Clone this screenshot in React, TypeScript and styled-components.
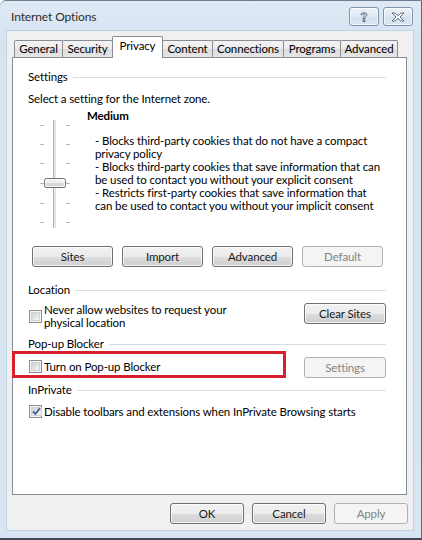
import React from "react";
import styled, { createGlobalStyle } from "styled-components";

const Global = createGlobalStyle`
  html, body { margin: 0; padding: 0; background: #ffffff; }
  body { font-family: Lato, "Noto Sans", sans-serif; font-size: 12px; color: #000; }
  * { box-sizing: border-box; }
`;

const FONT = `Lato, "Noto Sans", sans-serif`;

const Window = styled.div`
  width: 422px;
  height: 540px;
  display: flex;
  flex-direction: column;
  background: linear-gradient(#dfe9f5, #d6e3f1 40px, #d9e5f2);
  border-top: 1px solid #6d7d90;
  border-right: 1px solid #5d6a78;
  border-bottom: 2px solid #3e4753;
  border-top-left-radius: 6px;
  overflow: hidden;
  font-family: ${FONT};
  font-size: 11.5px;
  letter-spacing: -0.12px;
`;

const TitleBar = styled.div`
  height: 29px;
  display: flex;
  align-items: center;
  padding: 0 8px 0 11px;
`;

const Title = styled.div`
  flex: 1;
  color: #2d2d2d;
  font-size: 12px;
  padding-top: 2px;
`;

const CaptionButtons = styled.div`
  display: flex;
  gap: 4px;
  margin-top: 2px;
`;

const CaptionButton = styled.div`
  width: 30px;
  height: 19px;
  border: 1px solid #7f93ad;
  border-radius: 3px;
  background: linear-gradient(#eef3f9, #dde7f2 50%, #d3dfed 51%, #dbe6f2);
  box-shadow: inset 0 0 0 1px rgba(255, 255, 255, 0.7);
  display: flex;
  align-items: center;
  justify-content: center;
`;

const Body = styled.div`
  flex: 1;
  margin: 0 7px 7px 6px;
  background: #f0f0f0;
  border: 1px solid #c3d2e2;
  display: flex;
  flex-direction: column;
  padding: 5px 6px 0 5px;
`;

const Tabs = styled.div`
  display: flex;
  align-items: flex-end;
  height: 21px;
  margin-left: 2px;
`;

const Tab = styled.div<{ $w: number; $active?: boolean }>`
  width: ${(p) => p.$w}px;
  height: ${(p) => (p.$active ? 22 : 17)}px;
  margin-left: -1px;
  margin-bottom: ${(p) => (p.$active ? -1 : 0)}px;
  position: relative;
  z-index: ${(p) => (p.$active ? 2 : 1)};
  border: 1px solid #898c95;
  border-bottom: none;
  border-radius: 2px 2px 0 0;
  background: ${(p) =>
    p.$active ? "#ffffff" : "linear-gradient(#f3f3f3, #ebebeb 50%, #dedede 51%, #e5e5e5)"};
  display: flex;
  justify-content: center;
  padding-top: ${(p) => (p.$active ? 2 : 1)}px;
  color: #000;
  &:first-child { margin-left: 0; }
`;

const Panel = styled.div`
  height: 438px;
  background: #ffffff;
  border: 1px solid #898c95;
  padding: 0 20px 0 15px;
  display: flex;
  flex-direction: column;
`;

const GroupHeading = styled.div<{ $mt: number }>`
  display: flex;
  align-items: center;
  gap: 5px;
  height: 15px;
  line-height: 15px;
  margin-top: ${(p) => p.$mt}px;
  &::after {
    content: "";
    flex: 1;
    height: 1px;
    background: #d5dfe5;
    margin-top: 1px;
  }
`;

const Para = styled.div<{ $mt: number }>`
  line-height: 15px;
  margin-top: ${(p) => p.$mt}px;
`;

const SliderRow = styled.div`
  display: flex;
  margin-top: 2px;
`;

const SliderArt = styled.svg`
  width: 40px;
  height: 112px;
  margin-left: 9px;
  margin-top: 10px;
  flex: none;
`;

const LevelText = styled.div`
  margin-left: 10px;
  display: flex;
  flex-direction: column;
`;

const LevelName = styled.div`
  font-weight: bold;
  line-height: 15px;
`;

const LevelDesc = styled.div`
  margin-top: 11px;
  margin-left: 8px;
  display: flex;
  flex-direction: column;
`;

const DescLine = styled.div`
  line-height: 13px;
  height: 13px;
  white-space: nowrap;
`;

const ButtonRow = styled.div<{ $mt: number; $ml?: number; $justify?: string; $grow?: boolean }>`
  display: flex;
  gap: 9px;
  flex: ${(p) => (p.$grow ? 1 : "none")};
  margin-top: ${(p) => p.$mt}px;
  margin-left: ${(p) => p.$ml ?? 0}px;
  justify-content: ${(p) => p.$justify ?? "flex-start"};
`;

const Button = styled.div<{ $w: number; $disabled?: boolean }>`
  width: ${(p) => p.$w}px;
  height: 21px;
  flex: none;
  border: 1px solid ${(p) => (p.$disabled ? "#adb2b5" : "#707070")};
  border-radius: 3px;
  background: ${(p) =>
    p.$disabled
      ? "#f4f4f4"
      : "linear-gradient(#f2f2f2, #ebebeb 50%, #dddddd 51%, #cfcfcf)"};
  box-shadow: ${(p) => (p.$disabled ? "none" : "inset 0 0 0 1px rgba(255,255,255,0.75)")};
  color: ${(p) => (p.$disabled ? "#838383" : "#1a1a1a")};
  display: flex;
  align-items: center;
  justify-content: center;
  line-height: 13px;
`;

const OptionRow = styled.div<{ $mt: number }>`
  display: flex;
  align-items: flex-start;
  margin-top: ${(p) => p.$mt}px;
  position: relative;
`;

const CheckLabel = styled.div<{ $mt?: number }>`
  display: flex;
  align-items: center;
  gap: 2px;
  margin-top: ${(p) => p.$mt ?? 0}px;
  margin-left: 1px;
  line-height: 13px;
`;

const LabelText = styled.div`
  display: flex;
  flex-direction: column;
`;

const Box = styled.div`
  width: 13px;
  height: 13px;
  flex: none;
  border: 1px solid #8e8f8f;
  background: #f4f4f4;
  padding: 1px;
  display: flex;
  & > span {
    flex: 1;
    background: linear-gradient(135deg, #cbcfd5, #f6f6f6);
    border: 1px solid #d0d2d6;
    display: flex;
    align-items: center;
    justify-content: center;
  }
`;

const Highlight = styled.div`
  position: absolute;
  left: -16px;
  top: -6px;
  width: 274px;
  height: 27px;
  border: 3px solid #d6202c;
  pointer-events: none;
`;

const Footer = styled.div`
  display: flex;
  justify-content: flex-end;
  gap: 8px;
  margin-top: 8px;
  margin-right: -1px;
`;

function CheckBox({ checked }: { checked?: boolean }) {
  return (
    <Box>
      <span>
        {checked && (
          <svg width="9" height="9" viewBox="0 0 9 9">
            <path d="M1 4.5 L3.5 7 L8 1" fill="none" stroke="#4a5f97" strokeWidth="1.8" />
          </svg>
        )}
      </span>
    </Box>
  );
}

function Slider() {
  const ticks = [7, 26, 45, 65, 85, 104];
  return (
    <SliderArt viewBox="0 0 40 112">
      <defs>
        <linearGradient id="thumb" x1="0" y1="0" x2="0" y2="1">
          <stop offset="0" stopColor="#f7f7f7" />
          <stop offset="0.5" stopColor="#ececec" />
          <stop offset="0.51" stopColor="#dcdcdc" />
          <stop offset="1" stopColor="#d4d4d4" />
        </linearGradient>
      </defs>
      {ticks.map((y) => (
        <g key={y}>
          <line x1="3" x2="7" y1={y + 0.5} y2={y + 0.5} stroke="#b8b8b8" />
          <line x1="29" x2="33" y1={y + 0.5} y2={y + 0.5} stroke="#b8b8b8" />
        </g>
      ))}
      <rect x="16" y="2" width="3" height="108" fill="#e7eaea" />
      <line x1="16.5" x2="16.5" y1="2" y2="110" stroke="#b0b0b0" />
      <line x1="18.5" x2="18.5" y1="2" y2="110" stroke="#e3e3e3" />
      <rect x="7.5" y="60.5" width="21" height="9" rx="2" fill="url(#thumb)" stroke="#707070" />
      <rect x="8.5" y="61.5" width="19" height="7" rx="1.5" fill="none" stroke="#fbfbfb" strokeOpacity="0.8" />
    </SliderArt>
  );
}

const desc = [
  "- Blocks third-party cookies that do not have a compact",
  "privacy policy",
  "- Blocks third-party cookies that save information that can",
  "be used to contact you without your explicit consent",
  "- Restricts first-party cookies that save information that",
  "can be used to contact you without your implicit consent",
];

export default function App() {
  return (
    <>
      <Global />
      <Window>
        <TitleBar>
          <Title>Internet Options</Title>
          <CaptionButtons>
            <CaptionButton>
              <svg width="10" height="12" viewBox="0 0 10 12">
                <path
                  d="M2 3.5 C2 1.2 8 1.2 8 3.5 C8 5.3 5.8 5.3 5.8 7.5 L4.2 7.5 C4.2 5 6.3 5 6.3 3.6 C6.3 2.6 3.7 2.6 3.7 3.8 Z"
                  fill="#ffffff"
                  stroke="#4d5f7a"
                  strokeWidth="0.9"
                />
                <rect x="4.1" y="8.8" width="1.8" height="1.8" fill="#ffffff" stroke="#4d5f7a" strokeWidth="0.9" />
              </svg>
            </CaptionButton>
            <CaptionButton>
              <svg width="14" height="10" viewBox="0 0 14 10">
                <path
                  d="M1 1 L4 1 L7 3.6 L10 1 L13 1 L9 5 L13 9 L10 9 L7 6.4 L4 9 L1 9 L5 5 Z"
                  fill="#ffffff"
                  stroke="#4d5f7a"
                  strokeWidth="0.9"
                  strokeLinejoin="round"
                />
              </svg>
            </CaptionButton>
          </CaptionButtons>
        </TitleBar>
        <Body>
          <Tabs>
            <Tab $w={49}>General</Tab>
            <Tab $w={51}>Security</Tab>
            <Tab $w={51} $active>Privacy</Tab>
            <Tab $w={51}>Content</Tab>
            <Tab $w={72}>Connections</Tab>
            <Tab $w={58}>Programs</Tab>
            <Tab $w={58}>Advanced</Tab>
          </Tabs>
          <Panel>
            <GroupHeading $mt={11}>Settings</GroupHeading>
            <Para $mt={7}>Select a setting for the Internet zone.</Para>
            <SliderRow>
              <Slider />
              <LevelText>
                <LevelName>Medium</LevelName>
                <LevelDesc>
                  {desc.map((l) => (
                    <DescLine key={l}>{l}</DescLine>
                  ))}
                </LevelDesc>
              </LevelText>
            </SliderRow>
            <ButtonRow $mt={16} $ml={4}>
              <Button $w={81}>Sites</Button>
              <Button $w={81}>Import</Button>
              <Button $w={81}>Advanced</Button>
              <Button $w={81} $disabled>Default</Button>
            </ButtonRow>

            <GroupHeading $mt={15}>Location</GroupHeading>
            <OptionRow $mt={6}>
              <CheckLabel>
                <CheckBox />
                <LabelText>
                  <DescLine>Never allow websites to request your</DescLine>
                  <DescLine>physical location</DescLine>
                </LabelText>
              </CheckLabel>
              <ButtonRow $mt={0} $justify="flex-end" $grow>
                <Button $w={82}>Clear Sites</Button>
              </ButtonRow>
            </OptionRow>

            <GroupHeading $mt={7}>Pop-up Blocker</GroupHeading>
            <OptionRow $mt={6}>
              <Highlight />
              <CheckLabel $mt={3}>
                <CheckBox />
                <DescLine>Turn on Pop-up Blocker</DescLine>
              </CheckLabel>
              <ButtonRow $mt={0} $justify="flex-end" $grow>
                <Button $w={82} $disabled>Settings</Button>
              </ButtonRow>
            </OptionRow>

            <GroupHeading $mt={4}>InPrivate</GroupHeading>
            <OptionRow $mt={8}>
              <CheckLabel>
                <CheckBox checked />
                <DescLine>Disable toolbars and extensions when InPrivate Browsing starts</DescLine>
              </CheckLabel>
            </OptionRow>
          </Panel>
          <Footer>
            <Button $w={74}>OK</Button>
            <Button $w={74}>Cancel</Button>
            <Button $w={74} $disabled>Apply</Button>
          </Footer>
        </Body>
      </Window>
    </>
  );
}
